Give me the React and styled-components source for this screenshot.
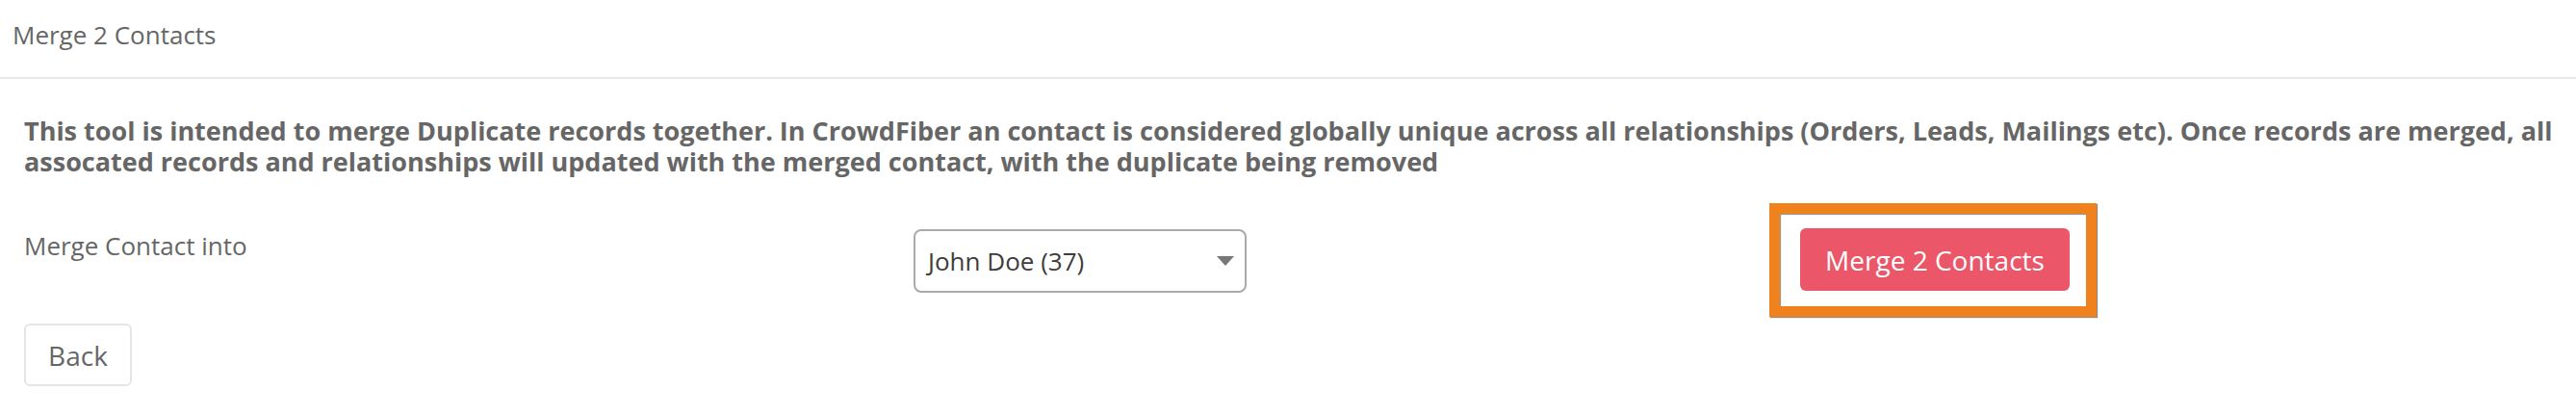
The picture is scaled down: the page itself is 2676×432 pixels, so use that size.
import React from "react";
import styled, { createGlobalStyle } from "styled-components";

const GlobalStyle = createGlobalStyle`
  html, body {
    margin: 0;
    padding: 0;
    background: #fff;
  }
  body {
    font-family: "Open Sans", "Liberation Sans", sans-serif;
    color: #666;
  }
`;

const MergeContacts = () => {
  return (
    <Page>
      <GlobalStyle />
      <Header>
        <Title>Merge 2 Contacts</Title>
      </Header>
      <Body>
        <Intro>
          This tool is intended to merge Duplicate records together. In
          CrowdFiber an contact is considered globally unique across all
          relationships (Orders, Leads, Mailings etc). Once records are merged,
          all assocated records and relationships will updated with the merged
          contact, with the duplicate being removed
        </Intro>
        <Row>
          <Label>Merge Contact into</Label>
          <Select>
            <SelectValue>John Doe (37)</SelectValue>
            <svg width="18" height="10" viewBox="0 0 18 10">
              <path d="M0 0 H18 L9 10 Z" fill="#777" />
            </svg>
          </Select>
          <ButtonCell>
            <Highlight />
            <PrimaryButton type="button">Merge 2 Contacts</PrimaryButton>
          </ButtonCell>
        </Row>
        <Footer>
          <DefaultButton type="button">Back</DefaultButton>
        </Footer>
      </Body>
    </Page>
  );
};

export default MergeContacts;

const Page = styled.div`
  width: 100%;
  min-height: 432px;
  background: #fff;
`;

const Header = styled.div`
  height: 82px;
  padding: 18px 13px 0;
  box-sizing: border-box;
  border-bottom: 2px solid #e5e9e9;
`;

const Title = styled.div`
  font-size: 26px;
  line-height: 37px;
  color: #666;
`;

const Body = styled.div`
  padding: 38px 14px 0 25px;
`;

const Intro = styled.p`
  margin: 0;
  font-size: 27px;
  line-height: 32px;
  font-weight: 700;
  color: #666;
`;

const Row = styled.div`
  display: flex;
  align-items: flex-start;
  margin-top: 53px;
`;

const Label = styled.div`
  width: 924px;
  flex-shrink: 0;
  font-size: 26px;
  line-height: 37px;
  color: #666;
`;

const Select = styled.div`
  width: 346px;
  height: 66px;
  box-sizing: border-box;
  margin-top: 1px;
  padding: 0 11px 0 13px;
  border: 2px solid #aaa;
  border-radius: 8px;
  display: flex;
  align-items: center;
  justify-content: space-between;
  background: #fff;
`;

const SelectValue = styled.span`
  font-size: 26px;
  color: #3d3d3d;
`;

const ButtonCell = styled.div`
  position: relative;
  margin-left: 575px;
`;

const Highlight = styled.div`
  position: absolute;
  left: -32px;
  top: -26px;
  right: -28px;
  bottom: -27px;
  border: 11px solid #f0821e;
  box-shadow: 1px 1px 1px rgba(0, 0, 0, 0.45),
    inset 1px 1px 1px rgba(0, 0, 0, 0.45);
  pointer-events: none;
`;

const PrimaryButton = styled.button`
  height: 65px;
  width: 280px;
  border: none;
  border-radius: 6px;
  background: #eb5668;
  color: #fff;
  font-family: "Open Sans", "Liberation Sans", sans-serif;
  font-size: 28px;
  cursor: pointer;
`;

const Footer = styled.div`
  margin-top: 32px;
`;

const DefaultButton = styled.button`
  height: 65px;
  width: 112px;
  box-sizing: border-box;
  border: 2px solid #e3e6e8;
  border-radius: 6px;
  background: #fff;
  color: #666;
  font-family: "Open Sans", "Liberation Sans", sans-serif;
  font-size: 28px;
  cursor: pointer;
`;
